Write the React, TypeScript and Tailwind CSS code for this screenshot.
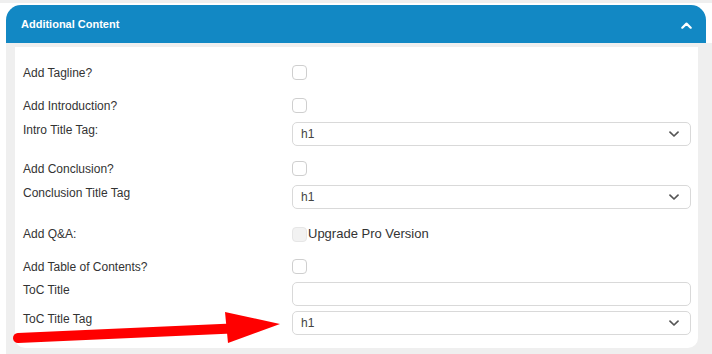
import React from "react";

const font = { fontFamily: '"Liberation Sans", Arial, sans-serif' };

function Checkbox({ disabled = false }: { disabled?: boolean }) {
  return (
    <div
      className={
        disabled
          ? "w-[15px] h-[15px] rounded-[4px] border border-[#e6e6e6] bg-[#f2f2f2]"
          : "w-[15px] h-[15px] rounded-[4px] border border-[#cfcfcf] bg-white"
      }
    />
  );
}

function Select() {
  return (
    <div className="w-[399px] h-[24px] rounded-[5px] border border-[#d9d9d9] bg-white flex items-center justify-between pl-[8px] pr-[11px]">
      <span className="text-[12px] text-[#444]">h1</span>
      <svg width="10" height="7" viewBox="0 0 10 7">
        <path d="M1 1.2 L5 5 L9 1.2" fill="none" stroke="#555" strokeWidth="1.7" strokeLinecap="round" strokeLinejoin="round" />
      </svg>
    </div>
  );
}

function Row({ label, mt, h, children }: { label: string; mt: string; h: string; children: React.ReactNode }) {
  return (
    <div className={`flex items-start ${mt} ${h}`}>
      <div className="w-[269px] text-[12px] leading-[16px] text-[#333]">{label}</div>
      <div className="flex items-center">{children}</div>
    </div>
  );
}

export default function App() {
  return (
    <div className="w-[712px] h-[354px] bg-white relative overflow-hidden" style={font}>
      <div className="h-[3px] bg-[#efefef]" />
      <div className="h-[2px] bg-white" />
      <div className="ml-[6px]">
        <div className="w-[700px] h-[38px] rounded-t-[15px] bg-[#1288c4] flex items-center justify-between pl-[15px] pr-[14px]">
          <span className="text-[11px] font-bold text-white">Additional Content</span>
          <svg width="11" height="7" viewBox="0 0 11 7" className="mt-[2px]">
            <path d="M1.3 5.7 L5.5 1.6 L9.7 5.7" fill="none" stroke="#fff" strokeWidth="2.2" strokeLinecap="round" strokeLinejoin="round" />
          </svg>
        </div>
        <div className="w-[706px] bg-[#efefef] pt-[4px] pl-[9px] pr-[14px] pb-[6px]">
          <div className="bg-white rounded-b-[10px] pt-[18px] pl-[8px] pr-[7px] pb-[13px]">
            <Row label="Add Tagline?" mt="mt-0" h="h-[15px]">
              <Checkbox />
            </Row>
            <Row label="Add Introduction?" mt="mt-[18px]" h="h-[15px]">
              <Checkbox />
            </Row>
            <Row label="Intro Title Tag:" mt="mt-[9px]" h="h-[24px]">
              <Select />
            </Row>
            <Row label="Add Conclusion?" mt="mt-[15px]" h="h-[15px]">
              <Checkbox />
            </Row>
            <Row label="Conclusion Title Tag" mt="mt-[9px]" h="h-[24px]">
              <Select />
            </Row>
            <Row label="Add Q&A:" mt="mt-[17px]" h="h-[15px]">
              <Checkbox disabled />
              <span className="ml-[1px] text-[13px] leading-[16px] text-[#333]">Upgrade Pro Version</span>
            </Row>
            <Row label="Add Table of Contents?" mt="mt-[18px]" h="h-[15px]">
              <Checkbox />
            </Row>
            <Row label="ToC Title" mt="mt-[8px]" h="h-[24px]">
              <div className="w-[399px] h-[24px] rounded-[5px] border border-[#d9d9d9] bg-white" />
            </Row>
            <Row label="ToC Title Tag" mt="mt-[5px]" h="h-[24px]">
              <Select />
            </Row>
          </div>
        </div>
      </div>
      <svg className="absolute left-0 top-0 pointer-events-none" width="712" height="354" viewBox="0 0 712 354">
        <line x1="18" y1="338" x2="232" y2="328.5" stroke="#ff0000" strokeWidth="10" strokeLinecap="round" />
        <polygon points="225,312 280,324 228,343" fill="#ff0000" />
      </svg>
    </div>
  );
}
